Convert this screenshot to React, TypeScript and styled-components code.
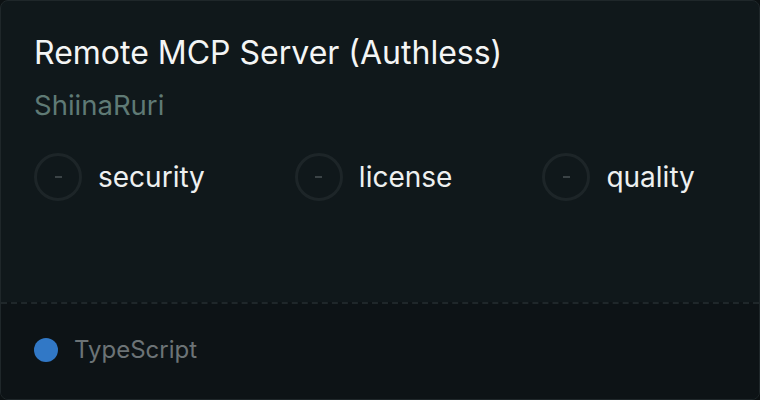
import React from 'react';
import styled, { createGlobalStyle } from 'styled-components';

const GlobalStyle = createGlobalStyle`
  html, body {
    margin: 0;
    padding: 0;
    background: #0c1113;
  }
  * {
    box-sizing: border-box;
  }
`;

const Card = styled.div`
  display: flex;
  flex-direction: column;
  width: 760px;
  height: 400px;
  border: 1px solid #1f272a;
  border-radius: 8px;
  background-color: #10181b;
  overflow: hidden;
  font-family: Inter, 'Noto Sans', sans-serif;
`;

const Body = styled.div`
  flex: 1;
  display: flex;
  flex-direction: column;
  padding: 32px 33px 0 33px;
`;

const Title = styled.h1`
  margin: 0;
  font-size: 32px;
  font-weight: 400;
  line-height: 40px;
  color: #f4f5f5;
`;

const Author = styled.div`
  margin-top: 16px;
  font-size: 27.5px;
  line-height: 32px;
  color: #5f7a75;
`;

const Scores = styled.div`
  display: flex;
  align-items: center;
  gap: 90px;
  margin-top: 32px;
`;

const Score = styled.div`
  display: flex;
  align-items: center;
  gap: 16px;
`;

const Ring = styled.div`
  display: flex;
  align-items: center;
  justify-content: center;
  width: 48px;
  height: 48px;
  border: 3px solid #1d2528;
  border-radius: 50%;
`;

const Dash = styled.span`
  display: block;
  width: 7px;
  height: 2px;
  background-color: #3b4346;
`;

const Label = styled.span`
  font-size: 28px;
  line-height: 36px;
  color: #eef0f0;
`;

const Footer = styled.div`
  display: flex;
  align-items: center;
  gap: 16px;
  height: 97px;
  padding: 0 33px 4px 33px;
  border-top: 2px dashed #1f272a;
  background-color: #0d1316;
`;

const LangDot = styled.span<{ $color: string }>`
  width: 24px;
  height: 24px;
  border-radius: 50%;
  background-color: ${({ $color }) => $color};
`;

const LangName = styled.span`
  font-size: 24px;
  color: #6c7376;
`;

const scores = ['security', 'license', 'quality'];

const App = () => {
  return (
    <>
      <GlobalStyle />
      <Card>
        <Body>
          <Title>Remote MCP Server (Authless)</Title>
          <Author>ShiinaRuri</Author>
          <Scores>
            {scores.map((s) => (
              <Score key={s}>
                <Ring>
                  <Dash />
                </Ring>
                <Label>{s}</Label>
              </Score>
            ))}
          </Scores>
        </Body>
        <Footer>
          <LangDot $color="#3178c6" />
          <LangName>TypeScript</LangName>
        </Footer>
      </Card>
    </>
  );
};

export default App;
